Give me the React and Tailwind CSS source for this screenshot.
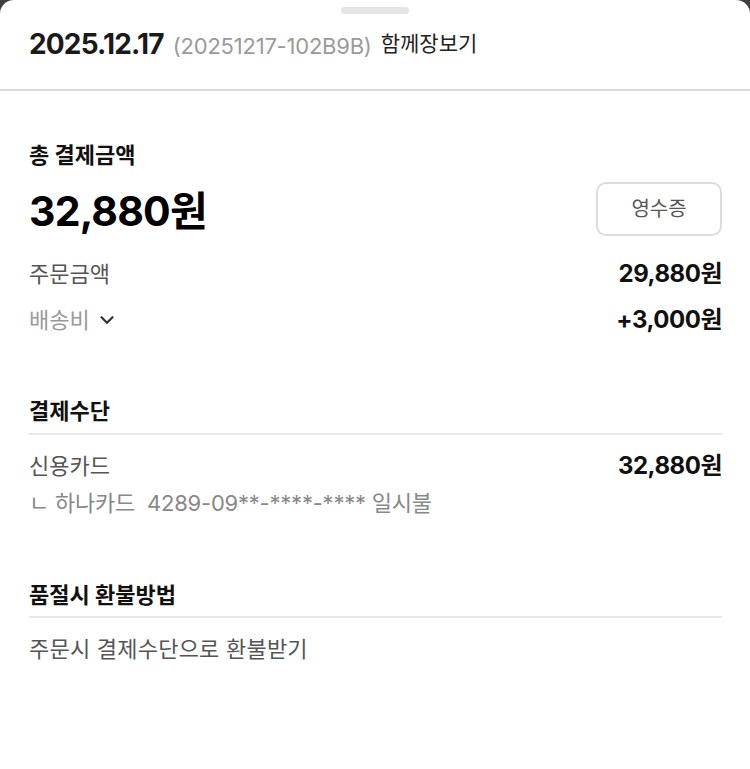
import { ChevronDown } from 'lucide-react';

const font = { fontFamily: 'Inter, "Noto Sans CJK KR", sans-serif' };

function Row({ label, value, muted, chevron }) {
  return (
    <div className="flex items-center justify-between h-[46px]">
      <div className={`flex items-center gap-[6px] text-[22px] ${muted ? 'text-[#9a9a9a]' : 'text-[#555]'}`}>
        <span>{label}</span>
        {chevron && <ChevronDown size={22} strokeWidth={2.4} className="text-[#333]" />}
      </div>
      <span className="text-[24px] font-bold text-[#111] tracking-[-0.02em]">{value}</span>
    </div>
  );
}

function SectionTitle({ children, pb = 'pb-[10px]' }) {
  return (
    <div className={`${pb} border-b-2 border-[#e8e8e8]`}>
      <h2 className="text-[22px] font-bold text-[#111] leading-[24px]">{children}</h2>
    </div>
  );
}

export default function App() {
  return (
    <div className="min-h-screen bg-[#3f3f3f]" style={font}>
      <div className="min-h-[769px] bg-white rounded-t-[14px] overflow-hidden">
        {/* drag handle */}
        <div className="flex justify-center pt-[7px]">
          <div className="w-[68px] h-[7px] rounded-full bg-[#e4e4e4]" />
        </div>

        {/* header */}
        <header className="flex items-baseline gap-[9px] px-[29px] pt-[14px] h-[77px] border-b-2 border-[#d9d9d9]">
          <span className="text-[28px] leading-[32px] font-bold text-[#1a1a1a] tracking-[-0.03em]">2025.12.17</span>
          <span className="text-[22px] text-[#9a9a9a] tracking-[-0.01em]">(20251217-102B9B)</span>
          <span className="text-[21px] text-[#222] relative -top-[3px]">함께장보기</span>
        </header>

        <main className="pl-[29px] pr-[28px]">
          {/* total */}
          <section className="pt-[52px]">
            <h2 className="text-[22px] font-bold text-[#111] leading-[24px]">총 결제금액</h2>
            <div className="flex items-center justify-between mt-[16px]">
              <span className="text-[41px] font-bold text-black tracking-[-0.02em] leading-[56px]">32,880원</span>
              <button className="w-[126px] h-[54px] rounded-[10px] border-2 border-[#dcdcdc] text-[20px] text-[#555] relative -top-[2px]">
                영수증
              </button>
            </div>
            <div className="mt-[12px]">
              <Row label="주문금액" value="29,880원" />
              <Row label="배송비" value="+3,000원" muted chevron />
            </div>
          </section>

          {/* payment method */}
          <section className="pt-[56px]">
            <SectionTitle>결제수단</SectionTitle>
            <div className="flex items-center justify-between mt-[16px] h-[30px]">
              <span className="text-[22px] text-[#555]">신용카드</span>
              <span className="text-[24px] font-bold text-[#111] tracking-[-0.02em]">32,880원</span>
            </div>
            <div className="mt-[7px] leading-[30px] text-[22px] text-[#888] tracking-[-0.01em]">
              ㄴ 하나카드&nbsp; 4289-09**-****-**** 일시불
            </div>
          </section>

          {/* refund */}
          <section className="pt-[65px]">
            <SectionTitle pb="pb-[9px]">품절시 환불방법</SectionTitle>
            <p className="mt-[16px] leading-[30px] text-[22px] text-[#555] tracking-[0.01em]">주문시 결제수단으로 환불받기</p>
          </section>
        </main>
      </div>
    </div>
  );
}
